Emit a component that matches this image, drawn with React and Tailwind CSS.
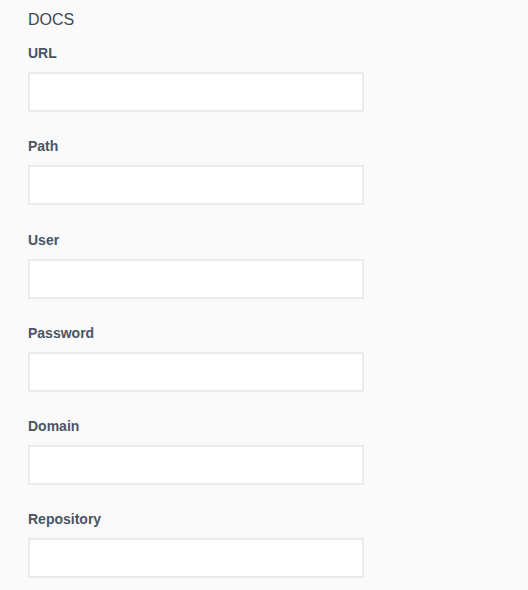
export default function App() {
  const fields = ["URL", "Path", "User", "Password", "Domain", "Repository"];
  return (
    <div className="min-h-[590px] w-[528px] bg-[#fafafa] pl-[28px] pt-[10px]" style={{ fontFamily: '"Liberation Sans", Arial, sans-serif' }}>
      <div className="text-[16px] leading-[20px] text-[#3d4855]">DOCS</div>
      <div className="mt-[13px] flex flex-col">
        {fields.map((f) => (
          <div key={f} className="mb-[24.3px] flex flex-col">
            <label className="text-[14px] font-bold leading-[20px] text-[#4a5563]">{f}</label>
            <input type="text" className="mt-[9px] h-[40px] w-[336px] border-2 border-[#ebebeb] bg-white outline-none" />
          </div>
        ))}
      </div>
    </div>
  );
}
